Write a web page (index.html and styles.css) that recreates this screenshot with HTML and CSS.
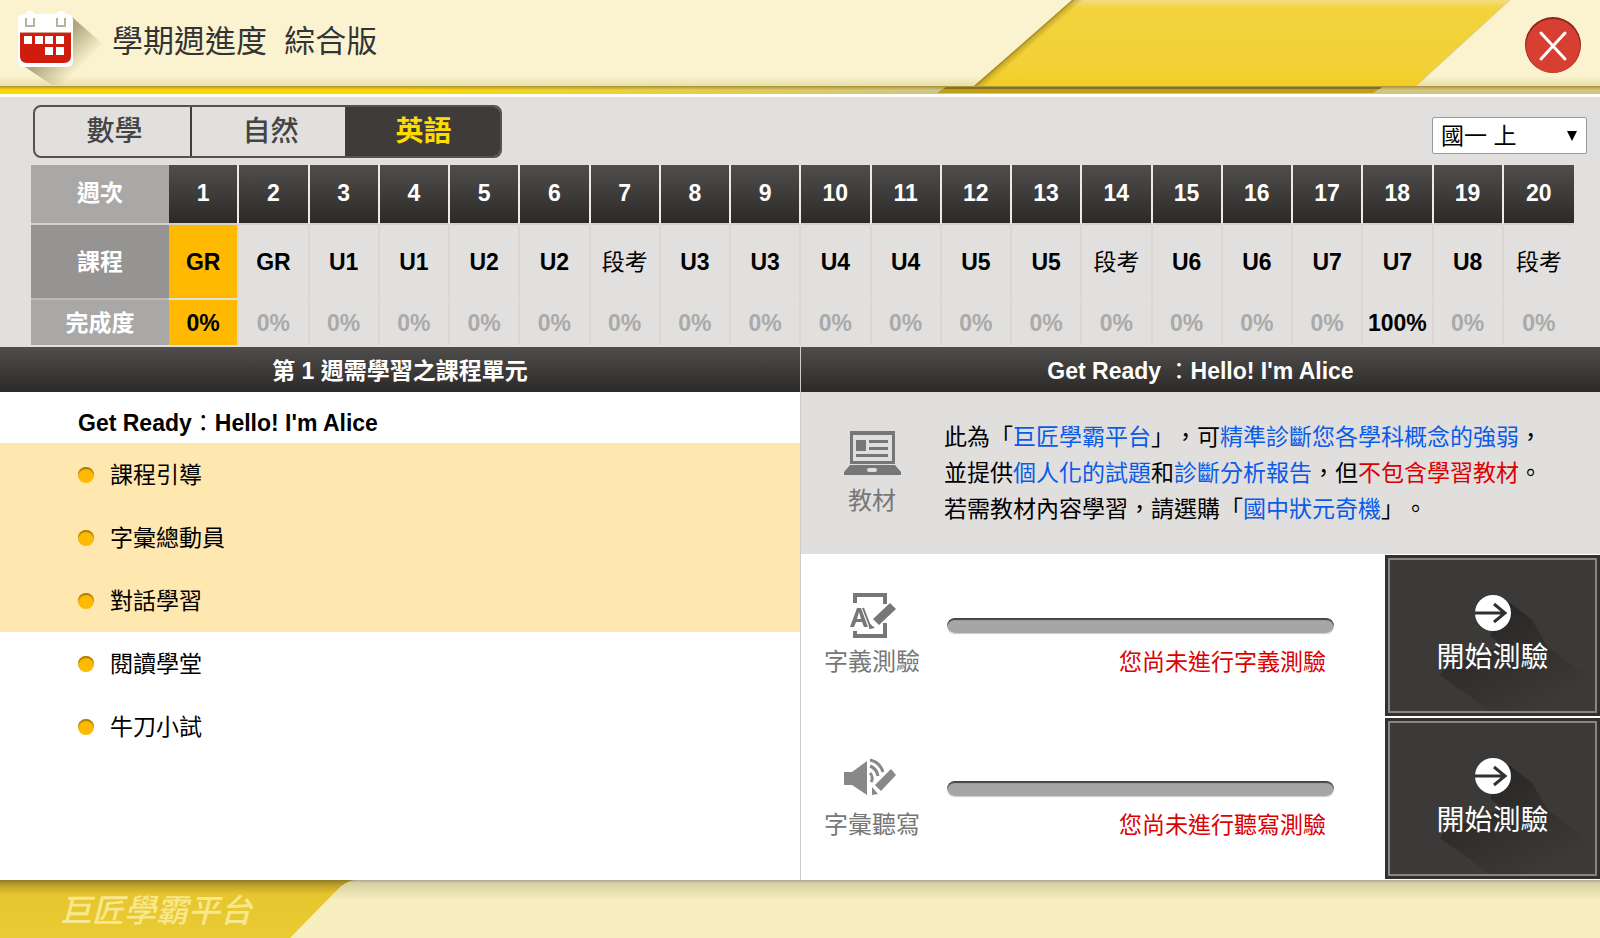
FILE: index.html
```html
<!DOCTYPE html>
<html lang="zh-Hant">
<head>
<meta charset="utf-8">
<title>學期週進度 綜合版</title>
<link rel="stylesheet" href="styles.css">
</head>
<body>
<header class="top">
  <svg class="top-art" width="700" height="95" viewBox="900 0 700 95" aria-hidden="true">
    <defs>
      <linearGradient id="band" x1="0" y1="0" x2="0" y2="1">
        <stop offset="0" stop-color="#f3dc80"/><stop offset=".1" stop-color="#f3d33c"/>
        <stop offset=".8" stop-color="#f2d136"/><stop offset="1" stop-color="#f2cc22"/>
      </linearGradient>
      <linearGradient id="edge" gradientUnits="userSpaceOnUse" x1="1023" y1="43" x2="1028.2" y2="48.9">
        <stop offset="0" stop-color="#8a7420" stop-opacity=".9"/><stop offset=".3" stop-color="#a88c1c" stop-opacity=".5"/><stop offset="1" stop-color="#a88c1c" stop-opacity="0"/>
      </linearGradient>
    </defs>
    <path d="M1072 0H1510L1416 86H974Z" fill="url(#band)"/>
    <path d="M1072 0h16L990 86H974Z" fill="url(#edge)"/>
    <path d="M1510 0L1416 86" stroke="#d9cd94" fill="none"/>
    <path d="M946 87H1382L1373 93H937Z" fill="#bd9f18"/>
    <path d="M946 87H1382L1380 89H943Z" fill="#84701a"/>
  </svg>
  <svg class="calendar" width="88" height="84" viewBox="0 0 88 84" aria-hidden="true">
    <defs><linearGradient id="cs" gradientUnits="userSpaceOnUse" x1="30" y1="40" x2="66" y2="76"><stop offset=".2" stop-color="#8d8558" stop-opacity=".7"/><stop offset=".85" stop-color="#8d8558" stop-opacity="0"/></linearGradient></defs>
    <path d="M56 16L88 44V84H36L6 64Z" fill="url(#cs)"/>
    <rect x="2" y="13" width="55" height="53" rx="6" fill="#fff"/>
    <rect x="10" y="10" width="8" height="16" rx="2" fill="#fff"/><rect x="41" y="10" width="8" height="16" rx="2" fill="#fff"/>
    <path d="M10 17v8h8v-8M41 17v8h8v-8" fill="none" stroke="#b5b3a0" stroke-width="2"/>
    <path d="M4 32H55V55Q55 62 48 62H11Q4 62 4 55Z" fill="#d01c0c"/>
    <path d="M4 32H55" stroke="#a8402c" stroke-width="1"/>
    <path d="M8 35h8v8H8zM19 35h8v8h-8zM29 35h8v8h-8zM40 35h8v8h-8zM29 46h8v8h-8zM40 46h8v8h-8z" fill="#fff"/>
  </svg>
  <h1 class="title">學期週進度&nbsp; 綜合版</h1>
  <button class="close" type="button" aria-label="關閉">
    <svg width="58" height="58" viewBox="0 0 58 58" aria-hidden="true">
      <circle cx="29" cy="29" r="28" fill="#8f241b"/><circle cx="29" cy="30" r="27" fill="#d63f31"/>
      <path d="M17 17L41 43M41 17L17 43" stroke="#fff" stroke-width="3" stroke-linecap="round"/>
    </svg>
  </button>
</header>

<main class="main">
  <section class="plan">
    <div class="toolbar">
      <nav class="tabs">
        <button class="tab" type="button">數學</button>
        <button class="tab" type="button">自然</button>
        <button class="tab tab-on" type="button">英語</button>
      </nav>
      <div class="grade">
        <select class="grade-select" aria-label="年級"><option>國一 上</option></select>
        <svg class="grade-arrow" width="10" height="10" viewBox="0 0 10 10" aria-hidden="true"><path d="M0 0H10L5 10Z"/></svg>
      </div>
    </div>
    <table class="weeks">
      <tr class="r-week"><th scope="row">週次</th><th>1</th><th>2</th><th>3</th><th>4</th><th>5</th><th>6</th><th>7</th><th>8</th><th>9</th><th>10</th><th>11</th><th>12</th><th>13</th><th>14</th><th>15</th><th>16</th><th>17</th><th>18</th><th>19</th><th>20</th></tr>
      <tr class="r-unit"><th scope="row">課程</th><td class="now">GR</td><td>GR</td><td>U1</td><td>U1</td><td>U2</td><td>U2</td><td class="exam">段考</td><td>U3</td><td>U3</td><td>U4</td><td>U4</td><td>U5</td><td>U5</td><td class="exam">段考</td><td>U6</td><td>U6</td><td>U7</td><td>U7</td><td>U8</td><td class="exam">段考</td></tr>
      <tr class="r-done"><th scope="row">完成度</th><td class="now">0%</td><td>0%</td><td>0%</td><td>0%</td><td>0%</td><td>0%</td><td>0%</td><td>0%</td><td>0%</td><td>0%</td><td>0%</td><td>0%</td><td>0%</td><td>0%</td><td>0%</td><td>0%</td><td>0%</td><td class="full">100%</td><td>0%</td><td>0%</td></tr>
    </table>
  </section>

  <div class="panels">
    <section class="lessons">
      <h2 class="bar">第 1 週需學習之課程單元</h2>
      <h3 class="lesson-title">Get Ready<span class="colon">：</span>Hello! I'm Alice</h3>
      <ul class="list">
        <li class="item hot">課程引導</li>
        <li class="item hot">字彙總動員</li>
        <li class="item hot">對話學習</li>
        <li class="item">閱讀學堂</li>
        <li class="item">牛刀小試</li>
      </ul>
    </section>

    <section class="detail">
      <h2 class="bar">Get Ready <span class="colon">：</span>Hello! I'm Alice</h2>
      <div class="material">
        <div class="kind">
          <svg width="58" height="48" viewBox="0 0 58 48" fill="#777" aria-hidden="true">
            <path d="M7 0H52V33H7ZM10 4V30H49V4Z" fill-rule="evenodd"/>
            <path d="M13 9h10v11h-10zM26 9h19v3H26zM26 16h19v3H26zM13 23h32v3H13z"/>
            <path d="M7 34H52L58 41V44H1V41Z"/>
            <rect x="24" y="37" width="10" height="4" rx="2" fill="#ddd"/>
          </svg>
          <span>教材</span>
        </div>
        <p class="note">此為「<em>巨匠學霸平台</em>」，可<em>精準診斷您各學科概念的強弱</em>，<br>並提供<em>個人化的試題</em>和<em>診斷分析報告</em>，但<strong>不包含學習教材</strong>。<br>若需教材內容學習，請選購「<em>國中狀元奇機</em>」。</p>
      </div>

      <div class="test">
        <div class="kind">
          <svg width="58" height="48" viewBox="0 0 58 48" aria-hidden="true">
            <path d="M12 11V3H42V12M12 39V44H42V31" fill="none" stroke="#777" stroke-width="4"/>
            <path d="M7 35L14 16H18L25 35H21L19 30H13L11 35ZM14 27H18L16 20Z" fill="#777" fill-rule="evenodd"/>
            <path d="M20 16L27 34" stroke="#777" stroke-width="2"/>
            <path d="M47 11L53 17L36 33L30 27ZM26 31L32 36L26 37Z" fill="#777"/>
          </svg>
          <span>字義測驗</span>
        </div>
        <div class="status">
          <progress class="meter" value="0" max="100" aria-label="字義測驗進度"></progress>
          <p class="warn">您尚未進行字義測驗</p>
        </div>
        <button class="start" type="button">
          <svg class="start-shade" viewBox="0 0 205 152" preserveAspectRatio="none" aria-hidden="true">
            <defs><linearGradient id="sh" gradientUnits="userSpaceOnUse" x1="100" y1="55" x2="150" y2="150"><stop offset="0" stop-color="#2a2827"/><stop offset=".45" stop-color="#31302e"/><stop offset="1" stop-color="#3c3a38"/></linearGradient></defs>
            <path d="M119 42L142 60L158 88L205 122V152H100L50 116L56 108L112 86L100 76Z" fill="url(#sh)"/>
          </svg>
          <svg class="start-icon" width="38" height="38" viewBox="0 0 38 38" aria-hidden="true"><circle cx="19" cy="19" r="18" fill="#fff"/><path d="M1 19H30M20 10L31 19L20 28" fill="none" stroke="#33312f" stroke-width="3"/></svg>
          <span class="start-text">開始測驗</span>
        </button>
      </div>

      <div class="test">
        <div class="kind">
          <svg width="58" height="48" viewBox="0 0 58 48" aria-hidden="true">
            <path d="M1 17H9L24 6V40L9 30H1Z" fill="#888"/>
            <path d="M27 5A18 18 0 0 1 40 17M27 11A13 13 0 0 1 35 21M27 18A7 7 0 0 1 28 27" fill="none" stroke="#888" stroke-width="3"/>
            <path d="M48 14L53 20L38 36L32 30ZM29 32L35 39L29 40Z" fill="#888"/>
          </svg>
          <span>字彙聽寫</span>
        </div>
        <div class="status">
          <progress class="meter" value="0" max="100" aria-label="字彙聽寫進度"></progress>
          <p class="warn">您尚未進行聽寫測驗</p>
        </div>
        <button class="start" type="button">
          <svg class="start-shade" viewBox="0 0 205 152" preserveAspectRatio="none" aria-hidden="true"><path d="M119 42L142 60L158 88L205 122V152H100L50 116L56 108L112 86L100 76Z" fill="url(#sh)"/></svg>
          <svg class="start-icon" width="38" height="38" viewBox="0 0 38 38" aria-hidden="true"><circle cx="19" cy="19" r="18" fill="#fff"/><path d="M1 19H30M20 10L31 19L20 28" fill="none" stroke="#33312f" stroke-width="3"/></svg>
          <span class="start-text">開始測驗</span>
        </button>
      </div>
    </section>
  </div>
</main>

<footer class="foot">
  <svg class="foot-art" width="360" height="58" viewBox="0 0 360 58" aria-hidden="true">
    <defs><linearGradient id="fg" x1="0" y1="0" x2="0" y2="1"><stop offset="0" stop-color="#8f7d24"/><stop offset=".1" stop-color="#c2a52a"/><stop offset=".25" stop-color="#e6c52e"/><stop offset="1" stop-color="#ebcb33"/></linearGradient></defs>
    <path d="M0 0H354Q345 2 338 9L290 58H0Z" fill="url(#fg)"/>
  </svg>
  <span class="brand">巨匠學霸平台</span>
</footer>
</body>
</html>
```
FILE: styles.css
```css
* { box-sizing: border-box; }
body {
  margin: 0;
  min-height: 100vh;
  display: flex;
  flex-direction: column;
  background: #fff;
  color: #000;
  font: 23px/36px "Liberation Sans", "Noto Sans CJK TC", sans-serif;
  text-spacing-trim: space-all;
}
h1, h2, h3, p, ul { margin: 0; padding: 0; }
button, select { font: inherit; cursor: pointer; }
svg { display: block; flex: none; }

.top {
  position: relative;
  display: flex;
  align-items: center;
  height: 97px;
  padding: 0 18px 9px 16px;
  background:
    linear-gradient(#fff, #fff) 0 94px / 100% 3px no-repeat,
    linear-gradient(#a5913c, transparent) 0 86px / 100% 4px no-repeat,
    linear-gradient(90deg, #ffd800 25%, #d3c680 57%) 0 86px / 100% 8px no-repeat,
    linear-gradient(#fbf3d0 88%, #e9dfa8) 0 0 / 100% 86px no-repeat;
}
.top-art { position: absolute; top: 0; right: 0; }
.calendar { margin-bottom: 2px; }
.title {
  flex: 1;
  margin: 0 0 4px 8px;
  font-size: 31px;
  line-height: 44px;
  font-weight: 400;
  color: #333;
}
.close { position: relative; margin-top: 2px; padding: 0; border: 0; background: none; border-radius: 50%; }

.main { flex: 1; display: flex; flex-direction: column; }
.plan { background: #e1e0df; padding: 8px 0 2px; }
.toolbar {
  display: flex;
  justify-content: space-between;
  align-items: center;
  padding: 0 13px 0 33px;
}
.tabs {
  display: grid;
  grid-template-columns: 157px 155px 153px;
  height: 53px;
  border: 2px solid #55524f;
  border-radius: 8px;
  overflow: hidden;
}
.tab {
  padding: 0 0 0 4px;
  border: 0;
  border-right: 2px solid #3f3c3a;
  background: transparent;
  color: #444;
  font-size: 28px;
  line-height: 40px;
  font-weight: 500;
}
.tab-on { padding: 0; border: 0; background: #3e3b38; color: #ffdc00; font-weight: 700; }
.grade { position: relative; margin-top: 8px; }
.grade-select {
  appearance: none;
  width: 155px;
  height: 37px;
  padding: 0 8px;
  border: 1px solid #999;
  border-radius: 2px;
  background: #fff;
  color: #000;
}
.grade-arrow { position: absolute; top: 14px; right: 10px; pointer-events: none; }

.weeks {
  width: calc(100% - 57px);
  margin: 7px 26px 0 31px;
  table-layout: fixed;
  border-collapse: separate;
  border-spacing: 0;
  text-align: center;
}
.weeks th, .weeks td { padding: 0; border-right: 2px solid #d8d7d6; font-weight: 700; }
.weeks th:first-child { width: 138px; border-right: 0; color: #fff; background: #a9a8a7; }
.weeks tr > :last-child { border-right: 0; }
.r-week th { height: 60px; padding-bottom: 2px; color: #fff; border-right-color: #ecebea; border-bottom: 2px solid #d2d1d0; }
.r-week th:not(:first-child) { background: linear-gradient(#504e4c, #2c2a28) padding-box; }
.r-unit > * { height: 75px; border-bottom: 2px solid #e1e0df; }
.weeks .r-unit th { background: #959493; border-bottom-color: #bbb; }
.r-done > * { height: 45px; }
.r-done td { color: #aaa; }
.weeks .exam { font-weight: 400; }
.weeks .now { background: #ffb900; color: #000; }
.r-done .full { color: #000; }

.panels { flex: 1; display: grid; grid-template-columns: 1fr 1fr; }
.bar {
  height: 45px;
  background: linear-gradient(#504e4c, #2c2a28);
  color: #fff;
  font-size: 23px;
  line-height: 48px;
  font-weight: 700;
  text-align: center;
}
.colon { font-weight: 400; }
.lesson-title { padding: 13px 0 2px 78px; font-size: 23px; line-height: 36px; }
.list { list-style: none; }
.item {
  display: flex;
  align-items: center;
  gap: 16px;
  height: 63px;
  padding-left: 78px;
}
.item::before {
  content: "";
  width: 16px;
  height: 16px;
  border-radius: 50%;
  background: #ffb900;
  box-shadow: inset 0 2px 1px #a87d10;
}
.hot { background: #ffe7b0; }

.detail { display: flex; flex-direction: column; border-left: 1px solid #ccc; }
.kind {
  width: 142px;
  display: flex;
  flex-direction: column;
  align-items: center;
  gap: 4px;
  color: #777;
  font-size: 24px;
}
.material {
  display: flex;
  height: 162px;
  padding-top: 27px;
  background: #e0dfdd;
}
.material .kind { padding-top: 12px; }
.note { padding-left: 1px; white-space: nowrap; }
.note em { font-style: normal; color: #0a5be8; }
.note strong { font-weight: 400; color: #d00; }
.test { flex: 1; display: flex; padding-top: 1px; }
.test .kind { padding-top: 37px; }
.status { flex: 1; padding: 63px 51px 0 4px; }
.meter {
  appearance: none;
  display: block;
  width: 100%;
  height: 15px;
  border: 0;
  border-radius: 8px;
  overflow: hidden;
  box-shadow: 0 1px 1px #ccc;
}
.meter::-webkit-progress-bar { background: #a6a6a6; border-radius: 8px; box-shadow: inset 0 2px 1px #444; }
.warn { padding: 11px 8px 0 0; color: #d00; text-align: right; }
.start {
  position: relative;
  width: 215px;
  margin-bottom: 1px;
  padding: 0;
  border: 3px solid #33312f;
  background: #3c3a38;
  outline: 2px solid #888684;
  outline-offset: -5px;
  color: #fff;
  display: flex;
  flex-direction: column;
  align-items: center;
  justify-content: center;
  gap: 6px;
}
.start-shade { position: absolute; inset: 2px; width: calc(100% - 4px); height: calc(100% - 4px); }
.start-icon, .start-text { position: relative; }
.start-text { font-size: 28px; line-height: 40px; font-weight: 400; }

.foot {
  position: relative;
  display: flex;
  align-items: center;
  height: 58px;
  padding: 4px 0 0 60px;
  background: linear-gradient(#aaa594, #d8d0a2 3px, #f8efc0 20px);
}
.foot-art { position: absolute; left: 0; top: 0; }
.brand {
  position: relative;
  font-size: 32px;
  line-height: 48px;
  font-weight: 500;
  font-style: italic;
  color: #f8e88c;
}
```
